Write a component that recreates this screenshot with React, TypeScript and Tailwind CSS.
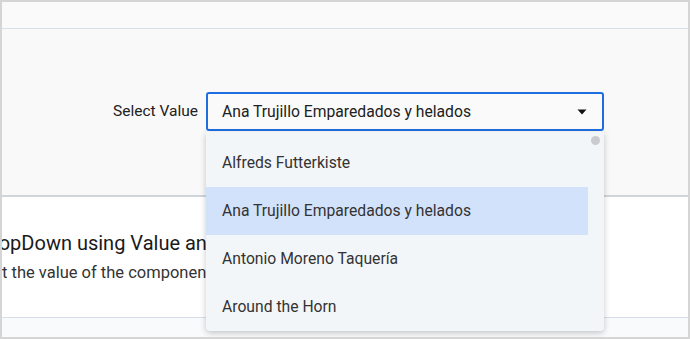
import React from "react";

const items = [
  "Alfreds Futterkiste",
  "Ana Trujillo Emparedados y helados",
  "Antonio Moreno Taquería",
  "Around the Horn",
];

const App = () => {
  const selected = items[1];
  return (
    <div
      className="w-[690px] h-[339px] border-2 border-[#d5d5d5] bg-[#fafafa] overflow-hidden text-[#212121]"
      style={{ fontFamily: "Roboto, 'Liberation Sans', sans-serif" }}
    >
      <div className="h-[27px] border-b border-[#d7dfea] bg-[#fafafa]" />

      <div className="relative z-10 h-[168px] bg-[#f9f9fa] border-b-2 border-[#d0d5db] pt-[63px]">
        <div className="flex items-center pl-[108px] gap-[8px]">
          <label className="w-[88px] text-right text-[15.5px] leading-[39px]">
            Select Value
          </label>
          <div className="relative">
            <div className="flex h-[39px] w-[398px] items-center justify-between rounded-[3px] border-2 border-[#1f6ee0] bg-[#fafafa] pl-[14px] pr-[15px]">
              <span className="text-[15.7px]">{selected}</span>
              <svg width="10" height="6" viewBox="0 0 10 6">
                <path d="M0.5 0.5 L9.5 0.5 L5 5.5 Z" fill="#111" />
              </svg>
            </div>

            <div className="absolute left-0 top-full mt-[1px] w-[398px] rounded-b-[4px] bg-[#f3f6f9] pt-[7px] shadow-[0_2px_6px_rgba(0,0,0,0.22)]">
              <div className="absolute right-[4px] top-[4px] h-[9px] w-[9px] rounded-full bg-[#c9cbce]" />
              {items.map((item) => (
                <div
                  key={item}
                  className={
                    item === selected
                      ? "mr-[16px] flex h-[48px] items-center bg-[#d3e2fb] pl-[16px] text-[15.7px] text-[#333]"
                      : "mr-[16px] flex h-[48px] items-center pl-[16px] text-[15.7px] text-[#333]"
                  }
                >
                  {item}
                </div>
              ))}
            </div>
          </div>
        </div>
      </div>

      <div className="h-[121px] overflow-hidden border-b border-[#d5dfea] bg-white pt-[32px]">
        <h2 className="ml-[-23px] whitespace-nowrap text-[20px] leading-[28px] text-[#1a1a1a]">
          DropDown using Value and Text Fields
        </h2>
        <p className="ml-[-20px] mt-[5px] whitespace-nowrap text-[16.5px] leading-[22px] text-[#333]">
          Get the value of the component and its text
        </p>
      </div>

      <div className="h-[20px] bg-[#f9fafb]" />
    </div>
  );
};

export default App;
